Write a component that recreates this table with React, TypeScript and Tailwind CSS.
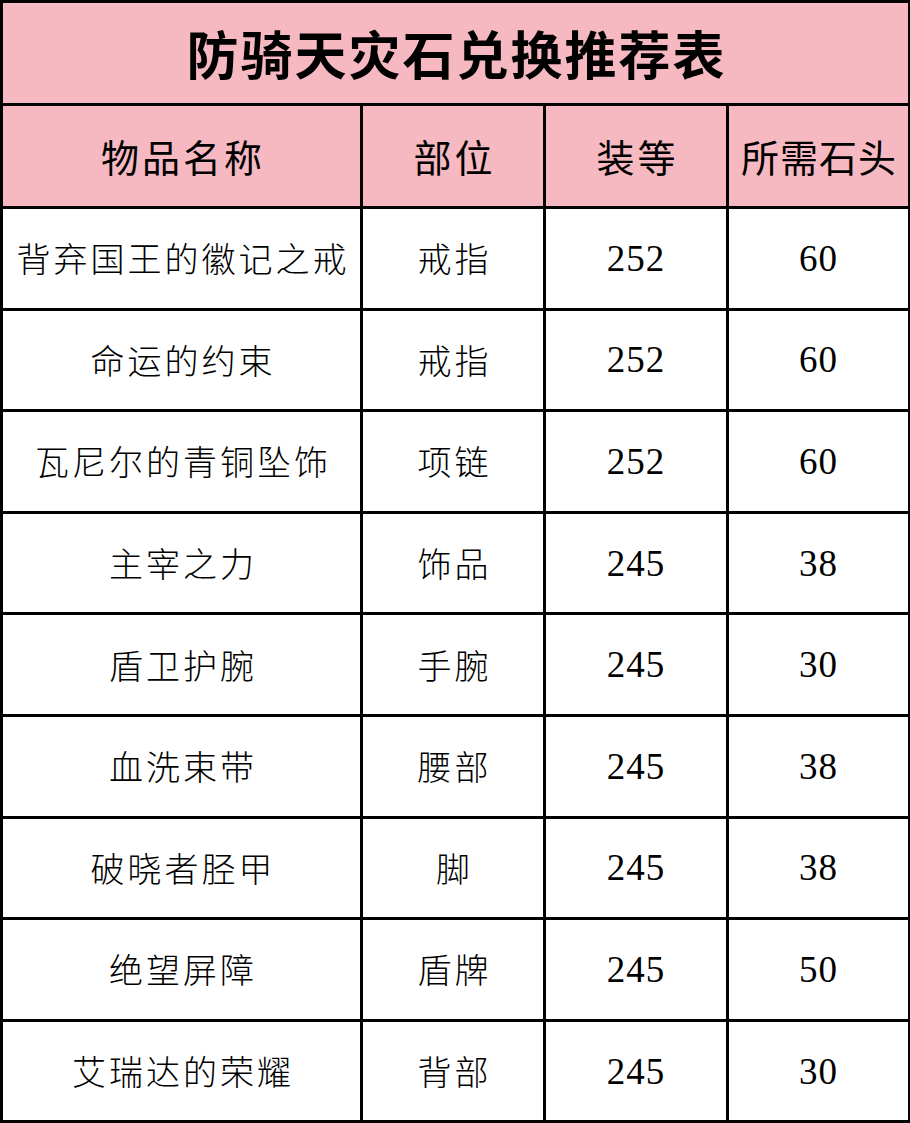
import React from "react";

const rows: [string, string, string, string][] = [
  ["背弃国王的徽记之戒", "戒指", "252", "60"],
  ["命运的约束", "戒指", "252", "60"],
  ["瓦尼尔的青铜坠饰", "项链", "252", "60"],
  ["主宰之力", "饰品", "245", "38"],
  ["盾卫护腕", "手腕", "245", "30"],
  ["血洗束带", "腰部", "245", "38"],
  ["破晓者胫甲", "脚", "245", "38"],
  ["绝望屏障", "盾牌", "245", "50"],
  ["艾瑞达的荣耀", "背部", "245", "30"],
];

const cjk = { fontFamily: '"Noto Sans CJK SC", sans-serif' };
const num = { fontFamily: '"Liberation Serif", "Noto Sans CJK SC", serif' };

export default function App() {
  return (
    <div className="w-[910px] h-[1123px] bg-white overflow-hidden">
      <table className="table-fixed border-collapse w-[909px] text-black">
        <colgroup>
          <col className="w-[360px]" />
          <col className="w-[183px]" />
          <col className="w-[183px]" />
          <col className="w-[182px]" />
        </colgroup>
        <tbody>
          <tr className="h-[103px] bg-[#f6b8c1]">
            <td
              colSpan={4}
              className="border-[3px] border-black text-center text-[52px] font-bold tracking-[2px] pl-[2px] leading-none"
              style={cjk}
            >
              防骑天灾石兑换推荐表
            </td>
          </tr>
          <tr className="h-[103px] bg-[#f6b8c1]" style={cjk}>
            <td className="border-[3px] border-black text-center text-[38px] tracking-[3px] pl-[3px] leading-none">物品名称</td>
            <td className="border-[3px] border-black text-center text-[38px] tracking-[3px] pl-[3px] leading-none">部位</td>
            <td className="border-[3px] border-black text-center text-[38px] tracking-[3px] pl-[3px] leading-none">装等</td>
            <td className="border-[3px] border-black text-center text-[38px] tracking-[1px] pl-[1px] leading-none whitespace-nowrap">所需石头</td>
          </tr>
          {rows.map((r, i) => (
            <tr key={i} className="h-[101.6px] bg-white">
              <td className="border-[3px] border-black text-center text-[34px] font-light tracking-[3px] pl-[3px] leading-none whitespace-nowrap" style={cjk}>{r[0]}</td>
              <td className="border-[3px] border-black text-center text-[34px] font-light tracking-[3px] pl-[3px] leading-none" style={cjk}>{r[1]}</td>
              <td className="border-[3px] border-black text-center text-[37px] tracking-[1px] leading-none" style={num}>{r[2]}</td>
              <td className="border-[3px] border-black text-center text-[37px] tracking-[1px] leading-none" style={num}>{r[3]}</td>
            </tr>
          ))}
        </tbody>
      </table>
    </div>
  );
}
